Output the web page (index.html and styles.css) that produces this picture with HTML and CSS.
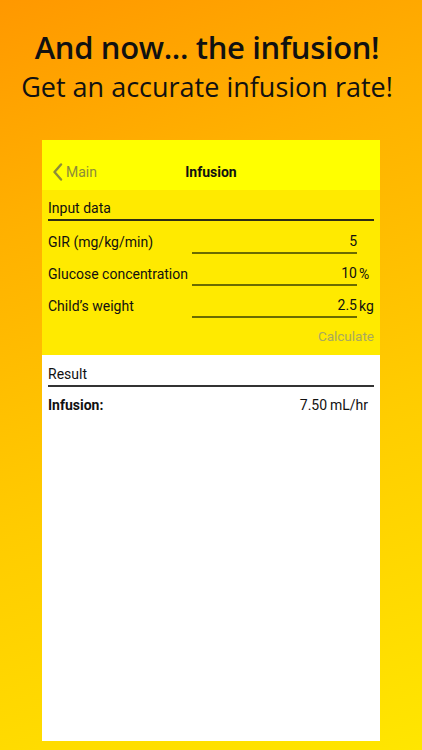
FILE: index.html
```html
<!DOCTYPE html>
<html>
<head>
<meta charset="utf-8">
<link rel="stylesheet" href="styles.css">
</head>
<body>
<div class="page">
  <header class="promo">
    <h1 class="title">And now... the infusion!</h1>
    <p class="subtitle">Get an accurate infusion rate!</p>
  </header>
  <div class="phone">
    <div class="navbar">
      <div class="back">
        <svg class="chev" width="11" height="18" viewBox="0 0 11 18"><path d="M9 1.5 L2.5 9 L9 16.5" fill="none" stroke="#8c8c3a" stroke-width="2.4" stroke-linecap="round" stroke-linejoin="round"/></svg>
        <span>Main</span>
      </div>
      <div class="navtitle">Infusion</div>
    </div>
    <div class="input">
      <div class="section">Input data</div>
      <div class="row first">
        <span class="label">GIR (mg/kg/min)</span>
        <span class="field">5</span>
        <span class="unit"></span>
      </div>
      <div class="row">
        <span class="label">Glucose concentration</span>
        <span class="field">10</span>
        <span class="unit">%</span>
      </div>
      <div class="row">
        <span class="label">Child’s weight</span>
        <span class="field">2.5</span>
        <span class="unit">kg</span>
      </div>
      <div class="calc">Calculate</div>
    </div>
    <div class="result">
      <div class="section dark">Result</div>
      <div class="resrow">
        <span class="reslabel">Infusion:</span>
        <span class="resval">7.50&#8201;mL/hr</span>
      </div>
    </div>
  </div>
</div>
</body>
</html>
```
FILE: styles.css
```css
html, body {
  margin: 0;
  padding: 0;
}
body {
  width: 422px;
  height: 750px;
  overflow: hidden;
  background: linear-gradient(160deg, #ff9800 0%, #ffb000 25%, #ffcc00 60%, #ffe600 100%);
}
.page {
  display: flex;
  flex-direction: column;
  height: 750px;
}
.promo {
  height: 140px;
  box-sizing: border-box;
  padding-right: 8px;
  display: flex;
  flex-direction: column;
  align-items: center;
  font-family: "Open Sans", sans-serif;
  color: #111;
}
.title {
  margin: 26px 0 0 0;
  font-size: 31px;
  font-weight: 600;
  line-height: 42px;
  letter-spacing: -0.35px;
}
.subtitle {
  margin: 0;
  font-size: 27px;
  font-weight: 400;
  line-height: 38px;
  letter-spacing: 0;
}
.phone {
  margin-left: 42px;
  width: 338px;
  height: 601px;
  background: #fff;
  display: flex;
  flex-direction: column;
  font-family: Roboto, sans-serif;
  font-size: 14px;
  color: #111;
}
.navbar {
  height: 50px;
  box-sizing: border-box;
  padding-top: 13px;
  background: #ffff00;
  position: relative;
  display: flex;
  align-items: center;
  justify-content: center;
}
.back {
  position: absolute;
  left: 10px;
  top: 13px;
  bottom: 0;
  display: flex;
  align-items: center;
  gap: 3px;
  color: #8c8c3a;
  font-size: 14px;
}
.chev {
  display: block;
}
.navtitle {
  font-weight: 700;
  font-size: 14px;
}
.input {
  background: #ffea00;
  padding: 0 6px 0 6px;
  height: 165px;
  display: flex;
  flex-direction: column;
}
.section {
  height: 29px;
  border-bottom: 2px solid #2e2e14;
  display: flex;
  align-items: flex-end;
  padding-bottom: 3px;
  box-sizing: border-box;
  margin-top: 2px;
}
.section.dark {
  border-bottom-color: #333;
  margin-top: 3px;
}
.row {
  display: flex;
  align-items: flex-end;
  height: 32px;
}
.row.first {
  height: 33px;
}
.label {
  flex: 0 0 144px;
  padding-bottom: 4px;
}
.field {
  flex: 0 0 165px;
  border-bottom: 2px solid #6b6b00;
  text-align: right;
  padding-bottom: 3px;
  box-sizing: border-box;
}
.unit {
  padding-left: 2px;
  padding-bottom: 4px;
}
.calc {
  margin-top: 10px;
  text-align: right;
  color: #a8a860;
  font-size: 13.5px;
}
.result {
  padding: 0 6px;
  display: flex;
  flex-direction: column;
}
.resrow {
  display: flex;
  justify-content: space-between;
  padding: 10px 6px 0 0;
}
.reslabel {
  font-weight: 700;
}
```
